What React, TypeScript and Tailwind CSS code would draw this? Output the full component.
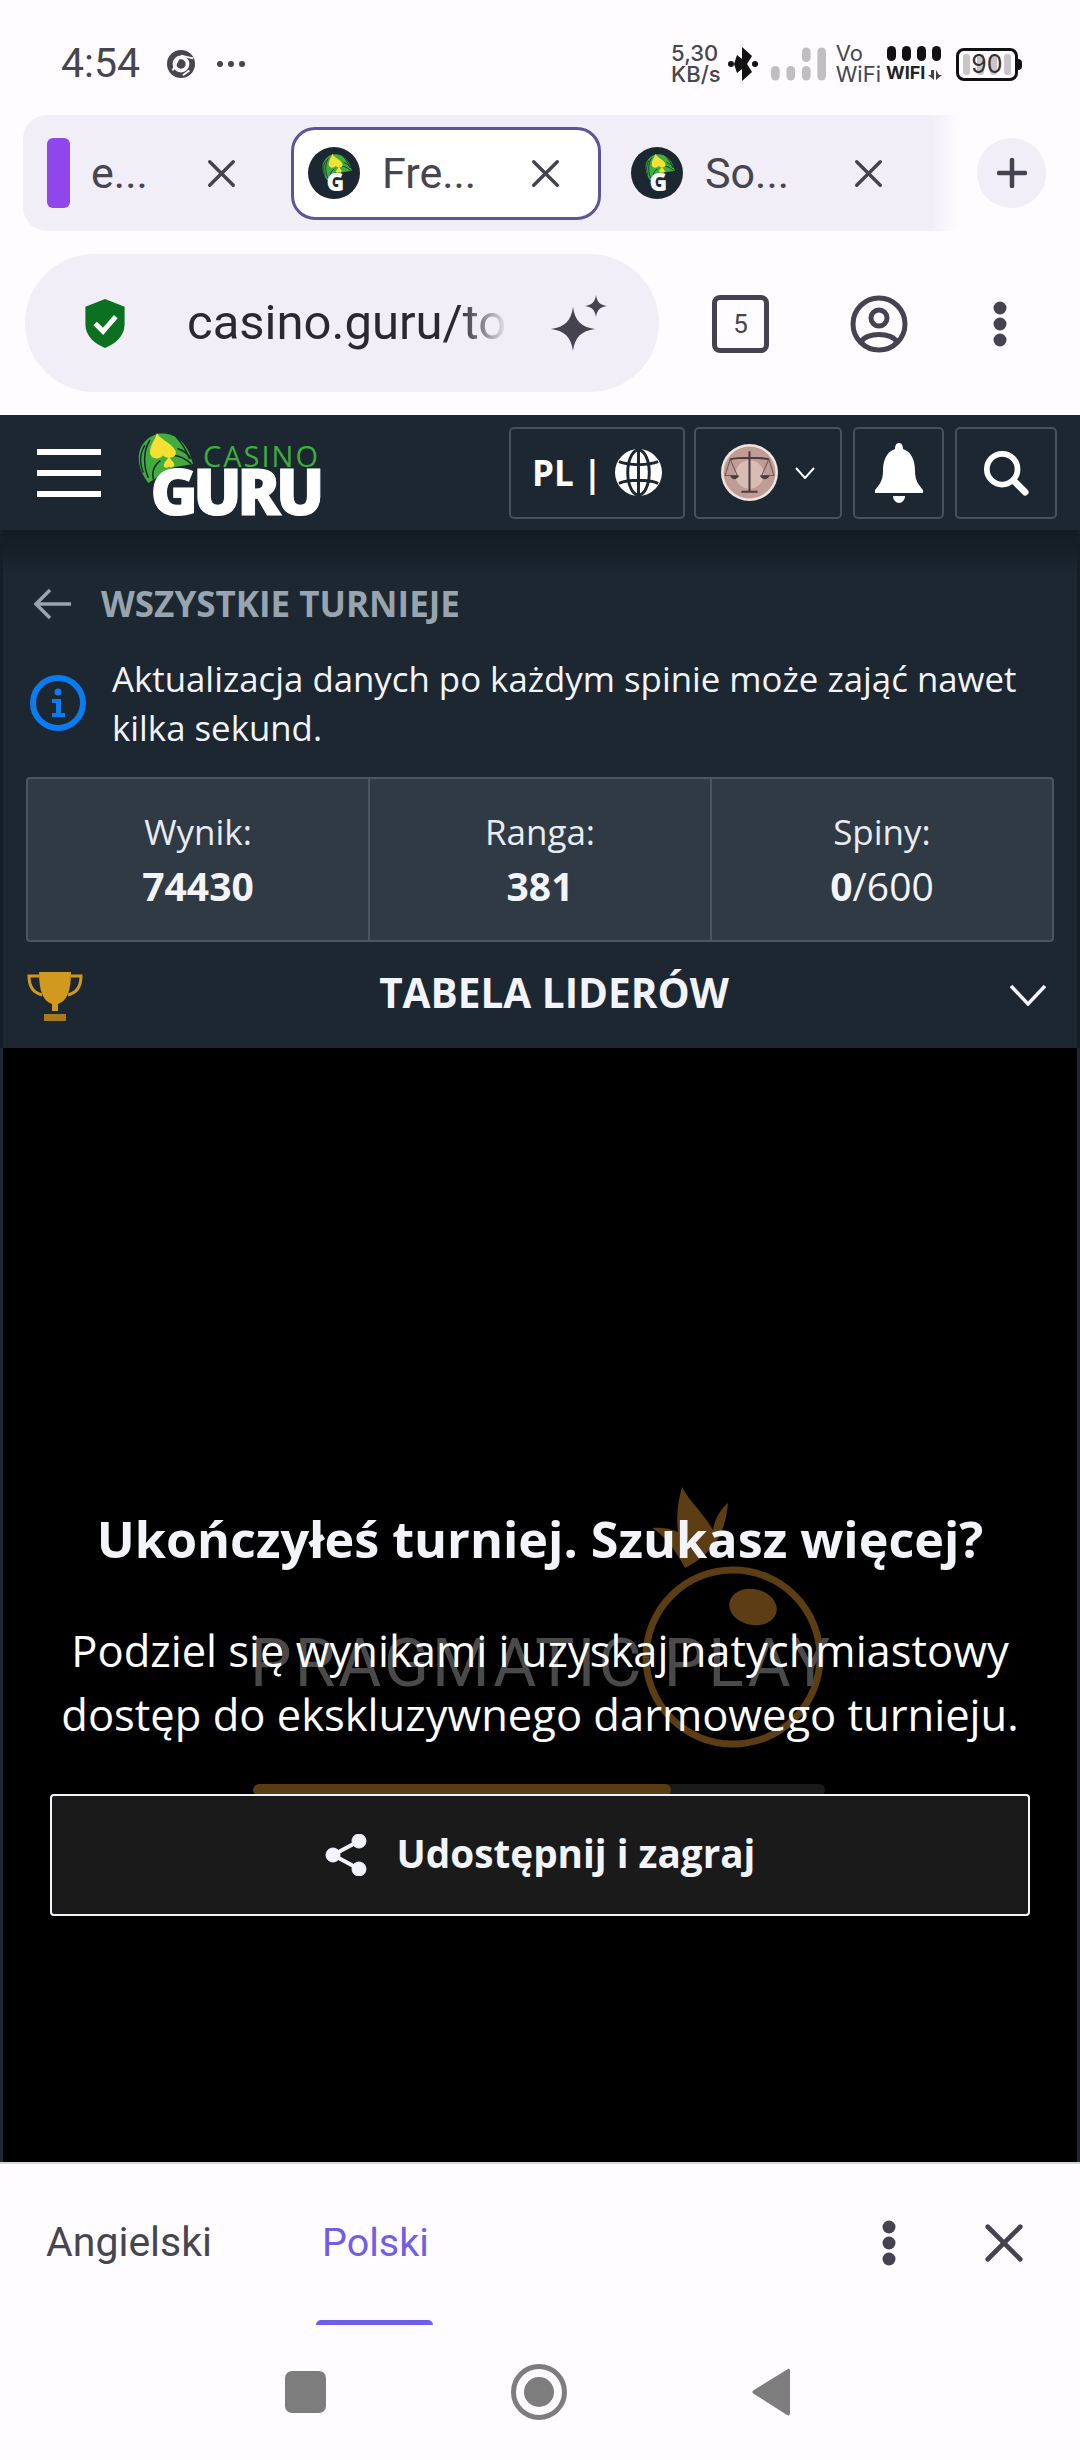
import type { ReactNode } from 'react';

function CloseIcon({ className }: { className: string }) {
  return (
    <svg viewBox="0 0 32 32" className={className} fill="none" stroke="#45434f" strokeWidth="3.8" strokeLinecap="round">
      <path d="M3 3 L29 29 M29 3 L3 29" />
    </svg>
  );
}

function DotsIcon({ className }: { className: string }) {
  return (
    <svg viewBox="0 0 14 46" className={className} fill="#45434f">
      <circle cx="7" cy="7" r="6.5" />
      <circle cx="7" cy="23" r="6.5" />
      <circle cx="7" cy="39" r="6.5" />
    </svg>
  );
}

function Leaves() {
  return (
    <>
      <path d="M22 1 C42 -2 58 10 64 36 L40 40 L12 58 C6 50 0 40 1 26 C2 14 10 5 22 1 Z" fill="#3fae3f" />
      <path d="M14 8 C6 20 6 38 12 52 M8 14 C2 24 2 36 6 46 M26 32 C18 38 16 46 18 54 M44 4 C52 12 56 20 60 30 M40 26 C48 26 56 30 62 36 M46 18 C52 20 58 24 62 30" stroke="#1c2731" strokeWidth="1.8" fill="none" />
      <path d="M22 0 C26 8 44 14 44 23 C44 30 34 30 29 26 C24 32 14 30 14 22 C14 14 20 8 22 0 Z" fill="#f8e032" />
      <path d="M36 27 C38 32 43 34 42 38 C40 41 37 40 36 39 C35 41 31 41 30 38 C30 34 34 32 36 27 Z" fill="#f8e032" />
    </>
  );
}

function Favicon() {
  return (
    <div className="relative flex h-[52px] w-[52px] shrink-0 items-end justify-center rounded-full bg-[#1c2731]">
      <svg viewBox="0 0 64 56" className="absolute left-[14px] top-[7px] h-[26px] w-[30px]">
        <Leaves />
      </svg>
      <span className="relative mb-[5px] ml-[3px] font-['Noto_Sans'] text-[24px] leading-[24px] font-black text-white">G</span>
    </div>
  );
}

function ChromeTab({ label, active }: { label: string; active?: boolean }) {
  return (
    <div
      className={
        active
          ? 'flex h-[93px] w-[310px] shrink-0 items-center rounded-[24px] border-[3px] border-[#5d5597] bg-white pl-[14px]'
          : 'flex h-[93px] w-[310px] shrink-0 items-center pl-[30px]'
      }
    >
      <Favicon />
      <span className="ml-[22px] w-[119px] font-['Roboto'] text-[43px] leading-none text-[#47454f]">{label}</span>
      <CloseIcon className="ml-[30px] h-[29px] w-[29px]" />
    </div>
  );
}

function StatusIcons() {
  return (
    <div className="flex items-center text-[#47454d]">
      <div className="font-['Inter'] text-[22px] leading-[21px] font-medium">
        <div>5,30</div>
        <div>KB/s</div>
      </div>
      <svg viewBox="0 0 30 34" className="ml-[7px] h-[34px] w-[30px]" fill="#111">
        <path d="M14 0 L24 9 L19 17 L24 25 L14 34 L14 22 L9 26 L6 17 L9 8 L14 12 Z" />
        <circle cx="3" cy="17" r="3" />
        <circle cx="27" cy="17" r="3" />
      </svg>
      <svg viewBox="0 0 58 36" className="ml-[13px] h-[36px] w-[56px]" fill="#c0bec2">
        <rect x="0" y="20" width="9" height="15" rx="4.5" />
        <rect x="16" y="20" width="9" height="15" rx="4.5" />
        <rect x="32" y="20" width="9" height="15" rx="4.5" />
        <rect x="32" y="1" width="9" height="15" rx="4.5" />
        <rect x="48" y="1" width="9" height="34" rx="4.5" />
      </svg>
      <div className="ml-[9px] font-['Inter'] text-[22px] leading-[21px]">
        <div>Vo</div>
        <div>WiFi</div>
      </div>
      <div className="ml-[5px] flex flex-col">
        <svg viewBox="0 0 58 16" className="h-[16px] w-[58px]" fill="#111">
          <rect x="1" y="0" width="9" height="15" rx="4.5" />
          <rect x="16" y="0" width="9" height="15" rx="4.5" />
          <rect x="31" y="0" width="9" height="15" rx="4.5" />
          <rect x="46" y="0" width="9" height="15" rx="4.5" />
        </svg>
        <div className="mt-[2px] flex items-center font-['Inter'] text-[18px] leading-[18px] font-bold text-[#222]">
          WIFI
          <svg viewBox="0 0 14 10" className="ml-[3px] mt-[4px] h-[10px] w-[14px]" fill="#444">
            <path d="M0 5 L3 5 L3 0 L6 0 L6 10 Z M8 0 L11 5 L14 5 L8 10 Z" />
          </svg>
        </div>
      </div>
      <div className="relative ml-[12px] flex h-[33px] w-[62px] items-center justify-center rounded-[8px] border-[3px] border-[#111]">
        <div className="absolute inset-y-[3px] left-[4px] right-[4px] flex justify-between">
          <span className="w-[7px] rounded-[3px] bg-[#c8c6ca]" />
          <span className="w-[7px] rounded-[3px] bg-[#c8c6ca]" />
          <span className="w-[7px] rounded-[3px] bg-[#c8c6ca]" />
          <span className="w-[7px] rounded-[3px] bg-[#c8c6ca]" />
        </div>
        <span className="relative font-['Inter'] text-[25px] leading-none text-[#333]">90</span>
      </div>
      <div className="h-[11px] w-[4px] rounded-r-full bg-[#111]" />
    </div>
  );
}

function HeaderButton({ children, className }: { children: ReactNode; className: string }) {
  return (
    <div className={`flex h-[92px] items-center justify-center rounded-[5px] border-2 border-[#46515b] ${className}`}>
      {children}
    </div>
  );
}

function Stat({ label, children, bordered }: { label: string; children: ReactNode; bordered?: boolean }) {
  return (
    <div className={`flex flex-1 flex-col items-center pt-[31px] ${bordered ? 'border-l-2 border-[#4b555f]' : ''}`}>
      <div className="text-[35px] leading-[44px] text-[#e8ecf2]">{label}</div>
      <div className="mt-[9px] text-[39px] leading-[46px] text-[#f2f4f9]">{children}</div>
    </div>
  );
}

export default function App() {
  return (
    <div className="flex h-[2460px] w-[1080px] flex-col overflow-hidden bg-[#fffcff]">
      {/* status bar */}
      <div className="flex h-[115px] shrink-0 items-center justify-between pl-[61px] pr-[58px] pt-[13px]">
        <div className="flex items-center">
          <span className="font-['Roboto'] text-[41px] text-[#47454d]">4:54</span>
          <svg viewBox="0 0 30 30" className="ml-[27px] h-[28px] w-[28px]">
            <circle cx="15" cy="15" r="12" fill="none" stroke="#47454d" strokeWidth="6" />
            <circle cx="15" cy="15" r="5" fill="#47454d" />
            <path d="M15 6 L28 9 M6 22 L12 10 M24 22 L17 27" stroke="#fffcff" strokeWidth="2" />
          </svg>
          <div className="ml-[22px] flex gap-[5px]">
            <span className="h-[6px] w-[6px] rounded-full bg-[#47454d]" />
            <span className="h-[6px] w-[6px] rounded-full bg-[#47454d]" />
            <span className="h-[6px] w-[6px] rounded-full bg-[#47454d]" />
          </div>
        </div>
        <StatusIcons />
      </div>

      {/* tab strip */}
      <div className="flex h-[116px] shrink-0 items-center">
        <div className="ml-[23px] flex h-full w-[937px] items-center overflow-hidden rounded-l-[24px] bg-gradient-to-r from-[#f1eef8] from-[97%] to-[#fffcff] pl-[24px]">
          <div className="h-[70px] w-[23px] shrink-0 rounded-[6px] bg-[#9146ec]" />
          <span className="ml-[21px] w-[116px] shrink-0 font-['Roboto'] text-[43px] leading-none text-[#47454f]">e...</span>
          <CloseIcon className="h-[29px] w-[29px] shrink-0" />
          <div className="ml-[55px] flex">
            <ChromeTab label="Fre..." active />
            <ChromeTab label="So..." />
          </div>
        </div>
        <div className="ml-[17px] flex h-[70px] w-[69px] items-center justify-center rounded-full bg-[#f1eef8]">
          <svg viewBox="0 0 30 30" className="h-[30px] w-[30px]" fill="none" stroke="#45434f" strokeWidth="4.5" strokeLinecap="round">
            <path d="M15 2 V28 M2 15 H28" />
          </svg>
        </div>
      </div>

      {/* url row */}
      <div className="flex h-[184px] shrink-0 items-start pt-[23px]">
        <div className="ml-[25px] flex h-[138px] w-[634px] items-center rounded-full bg-[#f1eef8] pl-[60px]">
          <svg viewBox="0 0 40 50" className="h-[49px] w-[40px]">
            <path d="M20 0 L40 8 V26 C40 38 30 46 20 50 C10 46 0 38 0 26 V8 Z" fill="#0b7020" />
            <path d="M10 25 L18 33 L31 18" fill="none" stroke="#fff" strokeWidth="5" />
          </svg>
          <div className="relative ml-[62px] w-[322px] overflow-hidden font-['Roboto'] text-[49px] leading-[60px] whitespace-nowrap text-[#2a2833]">
            casino.guru/to
            <div className="absolute inset-y-0 right-0 w-[50px] bg-gradient-to-r from-transparent to-[#f1eef8]" />
          </div>
          <svg viewBox="0 0 60 56" className="ml-[40px] h-[56px] w-[60px]" fill="#45434f">
            <path d="M24 12 C26 26 32 32 46 34 C32 36 26 42 24 56 C22 42 16 36 2 34 C16 32 22 26 24 12 Z" />
            <path d="M47 0 C48 7 51 10 58 11 C51 12 48 15 47 22 C46 15 43 12 36 11 C43 10 46 7 47 0 Z" />
          </svg>
        </div>
        <div className="ml-[53px] mt-[41px] flex h-[58px] w-[57px] items-center justify-center rounded-[8px] border-[5px] border-[#45434f] font-['Roboto'] text-[26px] text-[#45434f]">
          5
        </div>
        <svg viewBox="0 0 58 58" className="ml-[81px] mt-[41px] h-[58px] w-[58px]" fill="none" stroke="#45434f" strokeWidth="5">
          <circle cx="29" cy="29" r="26" />
          <circle cx="29" cy="23" r="8" />
          <path d="M11 47 C16 37 42 37 47 47" />
        </svg>
        <DotsIcon className="ml-[85px] mt-[47px] h-[46px] w-[14px]" />
      </div>

      {/* site header */}
      <div className="relative z-10 flex h-[115px] shrink-0 items-center bg-[#1c2731] pl-[37px] pr-[23px] font-['Open_Sans']">
        <div className="flex w-[64px] flex-col gap-[15px]">
          <div className="h-[6px] bg-white" />
          <div className="h-[6px] bg-white" />
          <div className="h-[6px] bg-white" />
        </div>
        <div className="ml-[37px] flex h-[92px] w-[182px] shrink-0 flex-col items-end">
          <div className="flex h-[41px] w-full items-start justify-between">
            <svg viewBox="0 0 64 58" className="mt-[6px] h-[50px] w-[55px] shrink-0">
              <Leaves />
            </svg>
            <span className="mt-[17px] text-[29px] leading-[24px] tracking-[2px] text-[#3fae3f]">CASINO</span>
          </div>
          <span className="relative font-['Noto_Sans'] text-[64px] leading-[46px] font-black tracking-[-4.5px] text-white [-webkit-text-stroke:1px_white]">GURU</span>
        </div>
        <div className="ml-auto flex items-center">
          <HeaderButton className="w-[176px] gap-[13px]">
            <span className="text-[35px] leading-none font-bold text-white">PL |</span>
            <svg viewBox="0 0 48 48" className="h-[47px] w-[47px]">
              <circle cx="24" cy="24" r="24" fill="#fff" />
              <ellipse cx="24" cy="24" rx="11" ry="23" fill="none" stroke="#1c2731" strokeWidth="3" />
              <path d="M24 0 V48 M4 13 C14 17 34 17 44 13 M4 35 C14 31 34 31 44 35" fill="none" stroke="#1c2731" strokeWidth="3" />
            </svg>
          </HeaderButton>
          <HeaderButton className="ml-[9px] w-[148px] gap-[17px]">
            <svg viewBox="0 0 56 56" className="h-[57px] w-[57px]">
              <circle cx="28" cy="28" r="28" fill="#f0e4e0" />
              <circle cx="28" cy="28" r="25.5" fill="#c09c96" />
              <circle cx="28" cy="30" r="14" fill="#d9bcb4" />
              <path d="M28 7 V46 M20 47 H36 M9 15 C16 13 40 13 47 15" stroke="#4d3b3e" strokeWidth="2" fill="none" />
              <path d="M9 15 L4 31 H16 Z M47 15 L40 31 H52 Z" stroke="#6e585a" strokeWidth="1" fill="none" />
              <path d="M9 31 C11 36 15 36 18 31 Z M38 31 C41 36 45 36 48 31 Z" fill="#4d3b3e" />
            </svg>
            <svg viewBox="0 0 20 12" className="h-[12px] w-[20px]" fill="none" stroke="#fff" strokeWidth="2">
              <path d="M1 1 L10 11 L19 1" />
            </svg>
          </HeaderButton>
          <HeaderButton className="ml-[11px] w-[91px]">
            <svg viewBox="0 0 48 60" className="h-[60px] w-[48px]" fill="#fff">
              <path d="M24 0 C27 0 28 3 28 6 C37 9 40 18 40 28 C40 38 44 42 48 47 V50 H0 V47 C4 42 8 38 8 28 C8 18 11 9 20 6 C20 3 21 0 24 0 Z" />
              <path d="M18 53 H30 C30 57 27 60 24 60 C21 60 18 57 18 53 Z" />
            </svg>
          </HeaderButton>
          <HeaderButton className="ml-[11px] w-[102px]">
            <svg viewBox="0 0 48 48" className="h-[46px] w-[46px]" fill="none" stroke="#fff" strokeLinecap="round">
              <circle cx="20" cy="20" r="16" strokeWidth="6" />
              <path d="M32 32 L44 44" strokeWidth="7" />
            </svg>
          </HeaderButton>
        </div>
      </div>

      {/* tournament panel */}
      <div className="flex h-[518px] shrink-0 flex-col border-x-[3px] border-[#151e27] bg-gradient-to-b from-[#121a22] to-[#1c2732] to-[9%] font-['Open_Sans']">
        <div className="flex items-center pl-[30px] pt-[52px]">
          <svg viewBox="0 0 38 32" className="h-[32px] w-[38px]" fill="none" stroke="#98a4ae" strokeWidth="3.5">
            <path d="M38 16 H3 M17 2 L3 16 L17 30" />
          </svg>
          <span className="ml-[30px] text-[35px] leading-[44px] font-bold text-[#98a4ae]">WSZYSTKIE TURNIEJE</span>
        </div>
        <div className="mt-[28px] flex items-center pl-[27px] pr-[17px]">
          <svg viewBox="0 0 56 56" className="h-[56px] w-[56px] shrink-0" fill="none">
            <circle cx="28" cy="28" r="25" stroke="#0a7cf0" strokeWidth="6" />
            <circle cx="28" cy="17" r="3.5" fill="#0a7cf0" />
            <path d="M22 24 H31 V38 H35 V42 H22 V38 H26 V28 H22 Z" fill="#0a7cf0" />
          </svg>
          <p className="ml-[26px] text-[34.8px] leading-[49px] text-[#f2f4f9]">
            Aktualizacja danych po każdym spinie może zająć nawet kilka sekund.
          </p>
        </div>
        <div className="mx-[23px] mt-[25px] flex h-[165px] rounded-[4px] border-2 border-[#4b555f] bg-[#303a44]">
          <Stat label="Wynik:">
            <b>74430</b>
          </Stat>
          <Stat label="Ranga:" bordered>
            <b>381</b>
          </Stat>
          <Stat label="Spiny:" bordered>
            <b>0</b>/600
          </Stat>
        </div>
        <div className="relative flex flex-1 items-center justify-center pb-[3px] pl-[28px]">
          <svg viewBox="0 0 56 50" className="absolute left-[24px] top-[29px] h-[50px] w-[56px]" fill="none">
            <path d="M12 1 H44 C44 20 40 30 31 33 V40 H25 V33 C16 30 12 20 12 1 Z" fill="#d19a1f" />
            <path d="M12 5 H2 C2 16 7 22 15 24 M44 5 H54 C54 16 49 22 41 24" stroke="#d19a1f" strokeWidth="3" />
            <path d="M17 43 H39 V50 H17 Z" fill="#a87a1c" />
          </svg>
          <span className="text-[40.5px] leading-none font-bold text-[#f2f4f9]">TABELA LIDERÓW</span>
          <svg viewBox="0 0 38 22" className="absolute right-[30px] top-[42px] h-[22px] w-[38px]" fill="none" stroke="#f2f4f9" strokeWidth="3.5">
            <path d="M2 2 L19 20 L36 2" />
          </svg>
        </div>
      </div>

      {/* game area */}
      <div className="relative flex h-[1114px] shrink-0 flex-col border-x-[3px] border-[#1c2732] bg-black font-['Open_Sans']">
        <svg viewBox="0 0 186 272" className="absolute left-[637px] top-[432px] h-[272px] w-[186px]" fill="none">
          <path d="M42 7 C50 22 64 34 73 50 C75 38 80 30 88 23 C86 45 80 70 45 88 C38 75 28 58 12 48 C20 47 30 48 38 52 C36 36 38 20 42 7 Z" fill="#5c3d14" />
          <circle cx="93" cy="177" r="87" stroke="#5c3d14" strokeWidth="7" />
          <ellipse cx="113" cy="127" rx="24" ry="18" transform="rotate(12 113 127)" fill="#5c3d14" />
        </svg>
        <div className="absolute left-[247px] top-[581px] font-['Roboto'] text-[66px] leading-[70px] tracking-[3px] whitespace-nowrap text-[#4a4a4a]">PRAGMATIC PLAY</div>
        <div className="absolute left-[250px] top-[736px] flex h-[12px] w-[572px] overflow-hidden rounded-full bg-[#1a1a1a]">
          <div className="h-full w-[418px] rounded-full bg-[#5a3c14]" />
        </div>
        <h2 className="relative mt-[459px] text-center text-[50.3px] leading-[64px] font-bold text-[#f2f4f9]">
          Ukończyłeś turniej. Szukasz więcej?
        </h2>
        <p className="relative mt-[48px] text-center text-[43.5px] leading-[64px] text-white">
          Podziel się wynikami i uzyskaj natychmiastowy
          <br />
          dostęp do ekskluzywnego darmowego turnieju.
        </p>
        <div className="relative mx-[47px] mt-[47px] flex h-[122px] items-center justify-center gap-[30px] rounded-[4px] border-2 border-[#f2f4f9] bg-[#1a1a1a]">
          <svg viewBox="0 0 42 42" className="h-[42px] w-[42px]" fill="#f2f4f9" stroke="#f2f4f9">
            <circle cx="34" cy="7" r="7" />
            <circle cx="34" cy="35" r="7" />
            <circle cx="8" cy="21" r="7" />
            <path d="M8 21 L34 7 M8 21 L34 35" strokeWidth="4" fill="none" />
          </svg>
          <span className="pb-[3px] text-[38.7px] leading-none font-bold text-[#f2f4f9]">Udostępnij i zagraj</span>
        </div>
      </div>

      {/* translate bar */}
      <div className="relative flex h-[161px] shrink-0 items-center border-t-2 border-[#d8d8d8] pb-[2px] font-['Roboto']">
        <span className="ml-[46px] text-[41px] leading-none text-[#47454f]">Angielski</span>
        <span className="ml-[110px] text-[39.5px] leading-none text-[#6f5fe6]">Polski</span>
        <DotsIcon className="ml-auto h-[46px] w-[14px]" />
        <CloseIcon className="ml-[88px] mr-[56px] h-[40px] w-[40px]" />
        <div className="absolute bottom-[-2px] left-[316px] h-[5px] w-[117px] rounded-t-[5px] bg-[#6f5fe6]" />
      </div>

      {/* android nav */}
      <div className="flex flex-1 items-center gap-[185px] pl-[285px]">
        <div className="h-[42px] w-[41px] rounded-[7px] bg-[#7d7d7d]" />
        <svg viewBox="0 0 56 56" className="h-[56px] w-[56px]" fill="none">
          <circle cx="28" cy="28" r="25.5" stroke="#7d7d7d" strokeWidth="5" />
          <circle cx="28" cy="28" r="15" fill="#7d7d7d" />
        </svg>
        <svg viewBox="0 0 38 48" className="h-[48px] w-[38px]" fill="#7d7d7d">
          <path d="M36 1 C38 0 38 2 38 3 V45 C38 47 37 48 35 47 L2 26 C0 25 0 23 2 22 Z" />
        </svg>
      </div>
    </div>
  );
}
